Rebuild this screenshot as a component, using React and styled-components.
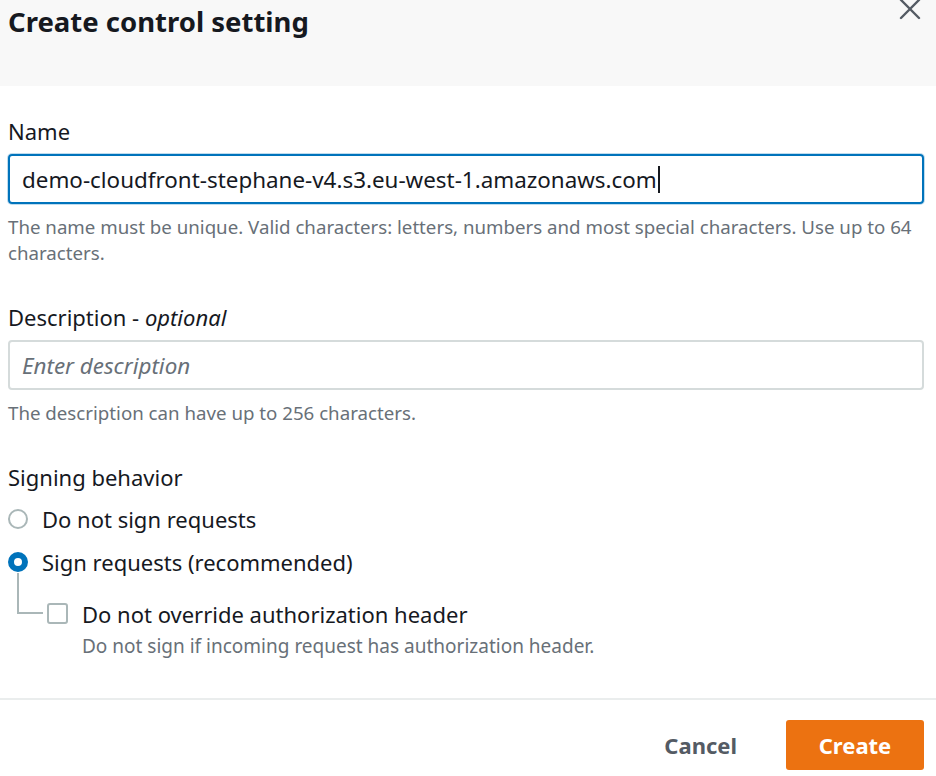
import styled, { createGlobalStyle } from 'styled-components';

const BLUE = '#0073bb';
const TEXT = '#16191f';
const MUTED = '#687078';
const ORANGE = '#ec7211';

const GlobalStyle = createGlobalStyle`
  html, body {
    margin: 0;
    padding: 0;
    background: #fff;
  }
  body {
    font-family: "Noto Sans", "Open Sans", sans-serif;
    color: ${TEXT};
  }
`;

function CloseIcon() {
  return (
    <svg width="24" height="24" viewBox="0 0 24 24">
      <path d="M3 3 L21 21 M21 3 L3 21" stroke="#545b64" strokeWidth="2.4" strokeLinecap="round" />
    </svg>
  );
}

export default function App() {
  return (
    <Modal>
      <GlobalStyle />
      <Header>
        <Title>Create control setting</Title>
        <CloseButton><CloseIcon /></CloseButton>
      </Header>
      <Body>
        <Field>
          <Label>Name</Label>
          <Input $focused>
            demo-cloudfront-stephane-v4.s3.eu-west-1.amazonaws.com<Caret />
          </Input>
          <Hint>The name must be unique. Valid characters: letters, numbers and most special characters. Use up to 64 characters.</Hint>
        </Field>
        <Field>
          <Label>Description - <em>optional</em></Label>
          <Input><Placeholder>Enter description</Placeholder></Input>
          <Hint>The description can have up to 256 characters.</Hint>
        </Field>
        <Field>
          <Label>Signing behavior</Label>
          <RadioList>
            <RadioRow>
              <Radio />
              <OptionText>Do not sign requests</OptionText>
            </RadioRow>
            <RadioRow>
              <Radio $checked />
              <OptionText>Sign requests (recommended)</OptionText>
            </RadioRow>
            <SubOption>
              <Connector />
              <Checkbox />
              <SubText>
                <OptionText>Do not override authorization header</OptionText>
                <SubHint>Do not sign if incoming request has authorization header.</SubHint>
              </SubText>
            </SubOption>
          </RadioList>
        </Field>
      </Body>
      <Footer>
        <CancelButton>Cancel</CancelButton>
        <CreateButton>Create</CreateButton>
      </Footer>
    </Modal>
  );
}

const Modal = styled.div`
  width: 936px;
  height: 776px;
  overflow: hidden;
  display: flex;
  flex-direction: column;
  background: #fff;
`;

const Header = styled.div`
  position: relative;
  height: 86px;
  flex-shrink: 0;
  background: #f8f8f8;
  padding: 2px 8px 0;
  box-sizing: border-box;
`;

const Title = styled.h1`
  margin: 0;
  font-size: 27.5px;
  font-weight: 700;
  line-height: 40px;
  color: ${TEXT};
`;

const CloseButton = styled.span`
  position: absolute;
  top: -3px;
  right: 14px;
  display: flex;
`;

const Body = styled.div`
  padding: 30px 12px 0 8px;
  display: flex;
  flex-direction: column;
  gap: 36px;
  flex: 1;
`;

const Field = styled.div`
  display: flex;
  flex-direction: column;
`;

const Label = styled.div`
  font-size: 22px;
  line-height: 30px;
  margin-bottom: 8px;
  color: ${TEXT};

  em {
    font-style: italic;
  }
`;

const Input = styled.div`
  height: 50px;
  box-sizing: border-box;
  border: ${p => (p.$focused ? `2px solid ${BLUE}` : '2px solid #d5dbdb')};
  border-radius: 4px;
  box-shadow: ${p => (p.$focused ? '0 0 0 1px rgba(0,115,187,0.25)' : 'none')};
  padding: 0 12px;
  display: flex;
  align-items: center;
  font-size: 22.4px;
  color: ${TEXT};
  white-space: nowrap;
`;

const Caret = styled.span`
  display: inline-block;
  width: 2px;
  height: 27px;
  background: ${TEXT};
  margin-left: 1px;
`;

const Placeholder = styled.span`
  font-style: italic;
  color: ${MUTED};
`;

const Hint = styled.div`
  margin-top: 10px;
  font-size: 18.7px;
  line-height: 26px;
  color: ${MUTED};
`;

const RadioList = styled.div`
  display: flex;
  flex-direction: column;
  margin-top: -3px;
`;

const RadioRow = styled.div`
  display: flex;
  align-items: center;
  gap: 14px;
  height: 43px;
`;

const Radio = styled.span`
  width: 20px;
  height: 20px;
  border-radius: 50%;
  box-sizing: border-box;
  border: ${p => (p.$checked ? `6px solid ${BLUE}` : '2px solid #aab7b8')};
  background: #fff;
  flex-shrink: 0;
`;

const OptionText = styled.div`
  font-size: 22px;
  line-height: 28px;
  color: ${TEXT};
`;

const SubOption = styled.div`
  position: relative;
  display: flex;
  align-items: flex-start;
  gap: 14px;
  padding: 17px 0 0 39px;
`;

const Connector = styled.span`
  position: absolute;
  left: 9px;
  top: -10px;
  width: 24px;
  height: 39px;
  border-left: 2px solid #aab7b8;
  border-bottom: 2px solid #aab7b8;
`;

const Checkbox = styled.span`
  width: 21px;
  height: 21px;
  margin-top: 3px;
  box-sizing: border-box;
  border: 2px solid #aab7b8;
  border-radius: 3px;
  flex-shrink: 0;
`;

const SubText = styled.div`
  display: flex;
  flex-direction: column;
`;

const SubHint = styled.div`
  margin-top: 5px;
  font-size: 19px;
  line-height: 26px;
  color: ${MUTED};
`;

const Footer = styled.div`
  height: 78px;
  flex-shrink: 0;
  box-sizing: border-box;
  border-top: 2px solid #eaeded;
  display: flex;
  align-items: flex-end;
  justify-content: flex-end;
  gap: 49px;
  padding: 0 12px 6px 8px;
`;

const CancelButton = styled.span`
  font-size: 22px;
  font-weight: 700;
  color: #545b64;
  line-height: 50px;
`;

const CreateButton = styled.span`
  width: 138px;
  height: 50px;
  background: ${ORANGE};
  border-radius: 3px;
  color: #fff;
  font-size: 22px;
  font-weight: 700;
  display: flex;
  align-items: center;
  justify-content: center;
`;
